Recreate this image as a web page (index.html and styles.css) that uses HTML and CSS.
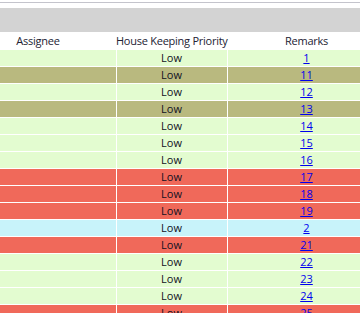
FILE: index.html
```html
<!DOCTYPE html>
<html>
<head>
<meta charset="utf-8">
<link rel="stylesheet" href="styles.css">
</head>
<body>
<div class="topline"></div>
<div class="toolbar"></div>
<table class="grid">
  <thead>
    <tr>
      <th class="c-assignee">Assignee</th>
      <th class="c-priority">House Keeping Priority</th>
      <th class="c-remarks">Remarks</th>
    </tr>
  </thead>
  <tbody>
    <tr class="green"><td></td><td>Low</td><td><a href="#">1</a></td></tr>
    <tr class="olive"><td></td><td>Low</td><td><a href="#">11</a></td></tr>
    <tr class="green"><td></td><td>Low</td><td><a href="#">12</a></td></tr>
    <tr class="olive"><td></td><td>Low</td><td><a href="#">13</a></td></tr>
    <tr class="green"><td></td><td>Low</td><td><a href="#">14</a></td></tr>
    <tr class="green"><td></td><td>Low</td><td><a href="#">15</a></td></tr>
    <tr class="green"><td></td><td>Low</td><td><a href="#">16</a></td></tr>
    <tr class="red"><td></td><td>Low</td><td><a href="#">17</a></td></tr>
    <tr class="red"><td></td><td>Low</td><td><a href="#">18</a></td></tr>
    <tr class="red"><td></td><td>Low</td><td><a href="#">19</a></td></tr>
    <tr class="cyan"><td></td><td>Low</td><td><a href="#">2</a></td></tr>
    <tr class="red"><td></td><td>Low</td><td><a href="#">21</a></td></tr>
    <tr class="green"><td></td><td>Low</td><td><a href="#">22</a></td></tr>
    <tr class="green"><td></td><td>Low</td><td><a href="#">23</a></td></tr>
    <tr class="green"><td></td><td>Low</td><td><a href="#">24</a></td></tr>
    <tr class="red"><td></td><td>Low</td><td><a href="#">25</a></td></tr>
  </tbody>
</table>
</body>
</html>
```
FILE: styles.css
```css
html, body {
  margin: 0;
  padding: 0;
  overflow: hidden;
  background: #ffffff;
  font-family: "Open Sans", "Noto Sans", sans-serif;
  font-size: 11px;
  color: #111122;
}
.topline {
  height: 1px;
  margin-top: 2px;
  background: #c4c4cc;
}
.toolbar {
  height: 24px;
  margin-top: 5px;
  background: #d3d3d3;
}
.grid {
  border-collapse: collapse;
  table-layout: fixed;
  width: 386px;
}
.grid th {
  font-weight: normal;
  height: 18px;
  padding: 0;
  text-align: center;
  line-height: 18px;
  white-space: nowrap;
  letter-spacing: -0.25px;
  color: #222233;
}
.c-assignee { width: 116px; padding-right: 40px !important; box-sizing: border-box; }
.c-priority { width: 111px; }
.c-remarks { width: 159px; }
.grid td {
  height: 16px;
  padding: 0;
  text-align: center;
  line-height: 16px;
  border-right: 1px solid #ffffff;
  border-bottom: 1px solid #ffffff;
  white-space: nowrap;
}
.grid a {
  color: #0000ee;
  text-decoration: underline;
}
.green td { background: #e3fcd0; }
.olive td { background: #b9b97f; }
.red td { background: #f0695a; }
.cyan td { background: #c8f3fa; }
```
